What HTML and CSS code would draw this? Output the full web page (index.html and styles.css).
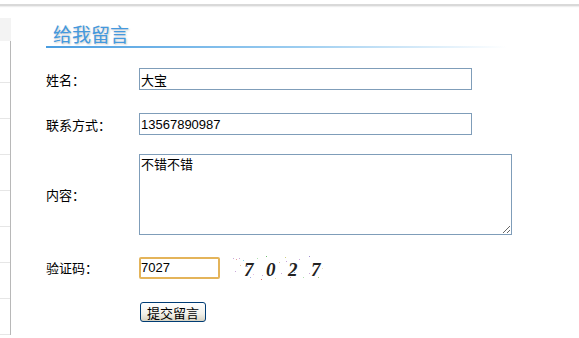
FILE: index.html
```html
<!DOCTYPE html>
<html>

<head>
  <title>给我留言</title>
  <link rel="stylesheet" href="styles.css">
</head>

<body>
  <div class="topbar"></div>
  <div id="page">
    <div class="side">
      <div class="side-head"></div>
      <ul class="side-list">
        <li class="first"></li>
        <li></li>
        <li></li>
        <li></li>
        <li></li>
        <li></li>
        <li></li>
        <li></li>
      </ul>
    </div>
    <div id="mainbox">
      <h2 class="title">给我留言</h2>
      <form name="msgForm" class="msgform" onsubmit="return false">
        <div class="row row-name">
          <label class="lbl" for="uname">姓名：</label>
          <input type="text" id="uname" class="txt" value="大宝">
        </div>
        <div class="row row-tel">
          <label class="lbl" for="tel">联系方式：</label>
          <input type="text" id="tel" class="txt" value="13567890987">
        </div>
        <div class="row row-content">
          <label class="lbl" for="content">内容：</label>
          <textarea id="content" class="area">不错不错</textarea>
        </div>
        <div class="row row-code">
          <label class="lbl" for="code">验证码：</label>
          <input type="text" id="code" class="txt code" value="7027">
          <svg class="captcha" width="100" height="26" viewBox="0 0 100 26">
            <g fill="#c9a9d9">
              <rect x="3" y="2" width="1" height="1"/>
              <rect x="6" y="3" width="1" height="1" fill="#e8a0a0"/>
              <rect x="9" y="2" width="1" height="1"/>
              <rect x="13" y="4" width="1" height="1" fill="#7fd7e8"/>
              <rect x="5" y="15" width="1" height="1"/>
              <rect x="10" y="9" width="1" height="1" fill="#e0c0a0"/>
              <rect x="20" y="21" width="1" height="1" fill="#9fa8e0"/>
              <rect x="27" y="2" width="1" height="1" fill="#b0e0b0"/>
              <rect x="32" y="19" width="1" height="1"/>
              <rect x="31" y="23" width="1" height="1" fill="#e07070"/>
              <rect x="36" y="0" width="1" height="1" fill="#70c070"/>
              <rect x="40" y="8" width="1" height="1" fill="#7fd7e8"/>
              <rect x="39" y="12" width="1" height="1"/>
              <rect x="45" y="22" width="1" height="1" fill="#e0e0a0"/>
              <rect x="51" y="17" width="1" height="1"/>
              <rect x="55" y="1" width="1" height="1" fill="#d0d080"/>
              <rect x="56" y="5" width="1" height="1"/>
              <rect x="60" y="21" width="1" height="1" fill="#e8a0a0"/>
              <rect x="64" y="16" width="1" height="1" fill="#9fa8e0"/>
              <rect x="69" y="3" width="1" height="1"/>
              <rect x="73" y="21" width="1" height="1" fill="#b0e0b0"/>
              <rect x="79" y="0" width="1" height="1" fill="#a090d0"/>
              <rect x="79" y="17" width="1" height="1"/>
              <rect x="88" y="21" width="1" height="1" fill="#a0d080"/>
              <rect x="92" y="12" width="1" height="1" fill="#e0e0c0"/>
              <rect x="17" y="10" width="1" height="1" fill="#9fa8e0"/>
              <rect x="49" y="6" width="1" height="1" fill="#e0c0a0"/>
              <rect x="23" y="18" width="1" height="1" fill="#e8c0e0"/>
            </g>
            <text x="14" y="20" class="cap-txt">7</text>
            <text x="36" y="20" class="cap-txt">0</text>
            <text x="58" y="20" class="cap-txt">2</text>
            <text x="81" y="20" class="cap-txt">7</text>
          </svg>
        </div>
        <div class="row row-btn">
          <button type="submit" class="btn">提交留言</button>
        </div>
      </form>
    </div>
  </div>
</body>

</html>
```

FILE: styles.css
```css
body {
  margin: 0;
  background: #fff;
  font-family: "Noto Sans CJK SC", "Liberation Sans", sans-serif;
  font-size: 13px;
  color: #000;
  overflow: hidden;
}

.topbar {
  height: 4px;
  border-bottom: 2px solid #d9d9d9;
  box-shadow: 0 1px 1px #eeeeee;
}

#page {
  display: flex;
}

.side {
  width: 11px;
  margin-top: 12px;
}

.side-head {
  height: 23px;
  background: #f3f3f3;
}

.side-list {
  list-style: none;
  margin: 0;
  padding: 0;
  border-right: 1px solid #b8b8b8;
}

.side-list li {
  height: 35px;
  border-bottom: 1px solid #e6e6e6;
}

.side-list li.first {
  height: 41px;
}

#mainbox {
  padding-left: 35px;
}

.title {
  margin: 17px 0 0 0;
  width: 454px;
  padding: 0 0 3px 7px;
  font-size: 19px;
  line-height: 22px;
  font-weight: normal;
  color: #4499de;
  text-shadow: 1px 1px 2px #c8c8c8;
  background: linear-gradient(to right, #4a9de0, #9ccdf0 55%, #ffffff) no-repeat left bottom;
  background-size: 100% 2px;
}

.msgform {
  margin-top: 20px;
}

.row {
  display: flex;
  align-items: center;
}

.lbl {
  width: 93px;
  flex: none;
}

.txt {
  box-sizing: border-box;
  width: 333px;
  height: 22px;
  margin: 0;
  padding: 0 1px;
  border: 1px solid #7f9db9;
  font-family: "Liberation Sans", "Noto Sans CJK SC", sans-serif;
  font-size: 13px;
  color: #000;
  outline: none;
}

.row-name {
  margin-bottom: 23px;
}

.row-tel {
  margin-bottom: 19px;
}

.area {
  box-sizing: border-box;
  width: 373px;
  height: 81px;
  margin: 0;
  padding: 1px 1px;
  border: 1px solid #7f9db9;
  font-family: "Noto Sans CJK SC", sans-serif;
  font-size: 13px;
  line-height: 16px;
  outline: none;
}

.row-content {
  margin-bottom: 18px;
}

.code {
  width: 81px;
  border: 2px solid #e4b45a;
  border-radius: 2px;
  padding: 0;
}

.captcha {
  align-self: flex-start;
  margin: 3px 0 0 10px;
}

.cap-txt {
  font-family: "Liberation Serif", serif;
  font-style: italic;
  font-weight: bold;
  font-size: 19px;
  fill: #222222;
}

.row-code {
  margin-bottom: 20px;
}

.row-btn {
  padding-left: 94px;
}

.btn {
  box-sizing: border-box;
  width: 66px;
  height: 20px;
  padding: 0;
  border: 1px solid #003c74;
  border-radius: 3px;
  background: linear-gradient(#ffffff, #f2f1ea 60%, #d6d2c2);
  font-family: "Noto Sans CJK SC", sans-serif;
  font-size: 13px;
  line-height: 17px;
  color: #000;
}
```
